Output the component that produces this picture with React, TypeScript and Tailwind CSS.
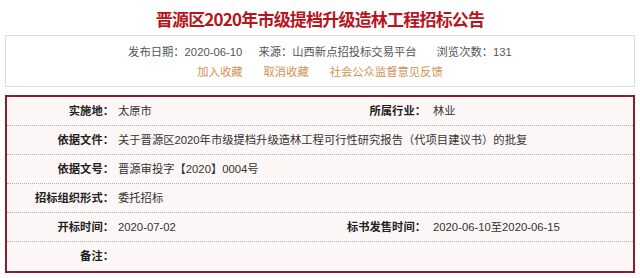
const FONT = '"Liberation Sans", "Noto Sans CJK SC", sans-serif';

interface Row {
  label: string;
  value: string;
  label2?: string;
  value2?: string;
}

const rows: Row[] = [
  { label: '实施地：', value: '太原市', label2: '所属行业：', value2: '林业' },
  {
    label: '依据文件：',
    value: '关于晋源区2020年市级提档升级造林工程可行性研究报告（代项目建议书）的批复',
  },
  { label: '依据文号：', value: '晋源审投字【2020】0004号' },
  { label: '招标组织形式：', value: '委托招标' },
  { label: '开标时间：', value: '2020-07-02', label2: '标书发售时间：', value2: '2020-06-10至2020-06-15' },
  { label: '备注：', value: '' },
];

export default function App() {
  return (
    <div className="w-[640px] h-[278px] bg-white overflow-hidden text-[11.3px]" style={{ fontFamily: FONT }}>
      <div className="h-[35px] pt-[9px] flex justify-center">
        <h1
          className="text-[17px] leading-[20px] font-bold text-[#b8141c] tracking-[-0.8px]"
          style={{ fontFamily: '"Noto Sans CJK SC", sans-serif' }}
        >
          晋源区2020年市级提档升级造林工程招标公告
        </h1>
      </div>

      <div className="mx-[5px] h-[52px] border border-[#dcdcdc] bg-white flex flex-col items-center pt-[8px] gap-[4px] text-[#555]">
        <div className="flex gap-[16px] leading-[16px]">
          <span>发布日期：2020-06-10</span>
          <span className="mr-[4px]">来源：山西新点招投标交易平台</span>
          <span>浏览次数：131</span>
        </div>
        <div className="flex gap-[21px] leading-[16px] text-[#d0924f]">
          <span>加入收藏</span>
          <span>取消收藏</span>
          <span>社会公众监督意见反馈</span>
        </div>
      </div>

      <div className="mt-[8px] mx-[5px] w-[630px] border-2 border-[#8c1f2b] bg-[#fdf6f6] text-[#333]">
        {rows.map((r, i) => (
          <div
            key={i}
            className={`flex h-[29px] items-center ${
              i < rows.length - 1 ? 'border-b border-dotted border-[#b9a9ab]' : 'h-[28px]'
            }`}
          >
            <div className="w-[107px] text-right font-bold text-[#222] shrink-0">{r.label}</div>
            <div className="pl-[4px] w-[213px] shrink-0 whitespace-nowrap">{r.value}</div>
            {r.label2 && (
              <>
                <div className="w-[99px] text-right font-bold text-[#222] shrink-0">{r.label2}</div>
                <div className="pl-[7px] whitespace-nowrap">{r.value2}</div>
              </>
            )}
          </div>
        ))}
      </div>
    </div>
  );
}
